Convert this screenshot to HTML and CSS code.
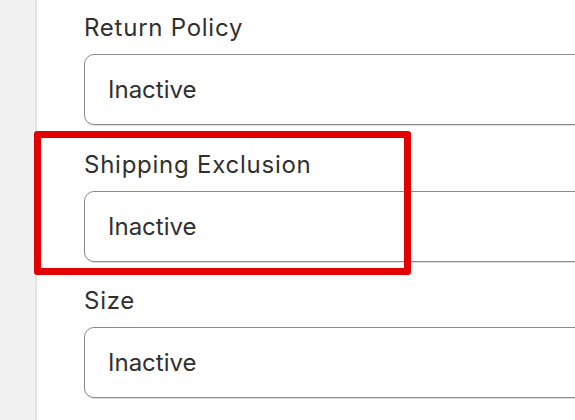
FILE: index.html
```html
<!DOCTYPE html>
<html>
<head>
<meta charset="utf-8">
<link rel="stylesheet" href="styles.css">
</head>
<body>
<div class="page">
  <aside class="sidebar"></aside>
  <main class="main">
    <div class="field">
      <div class="label">Return Policy</div>
      <div class="input">Inactive</div>
    </div>
    <div class="field">
      <div class="label">Shipping Exclusion</div>
      <div class="input">Inactive</div>
    </div>
    <div class="field">
      <div class="label">Size</div>
      <div class="input">Inactive</div>
    </div>
  </main>
  <div class="highlight"></div>
</div>
</body>
</html>
```

FILE: styles.css
```css
html, body {
  margin: 0;
  padding: 0;
  background: #ffffff;
  overflow: hidden;
}
body {
  font-family: Inter, "Noto Sans", sans-serif;
  color: #303030;
}
.page {
  position: relative;
  display: flex;
  width: 575px;
  height: 420px;
  overflow: hidden;
}
.sidebar {
  flex: 0 0 35px;
  background: #f1f1f1;
  border-right: 2px solid #e3e3e3;
}
.main {
  flex: 1 0 auto;
  padding: 13px 0 0 47px;
  display: flex;
  flex-direction: column;
  gap: 24.5px;
}
.field {
  display: flex;
  flex-direction: column;
  gap: 11px;
}
.label {
  font-size: 24px;
  line-height: 30px;
  letter-spacing: 0.75px;
}
.input {
  width: 600px;
  height: 69px;
  box-sizing: content-box;
  border: 1px solid #8a8a8a;
  border-radius: 10px;
  box-shadow: 0 1px 0 #e0e0e0;
  padding-left: 23px;
  font-size: 24px;
  line-height: 69px;
}
.highlight {
  position: absolute;
  left: 34px;
  top: 131px;
  width: 363px;
  height: 130px;
  border: 7px solid #e30000;
  border-radius: 3px;
}
```
